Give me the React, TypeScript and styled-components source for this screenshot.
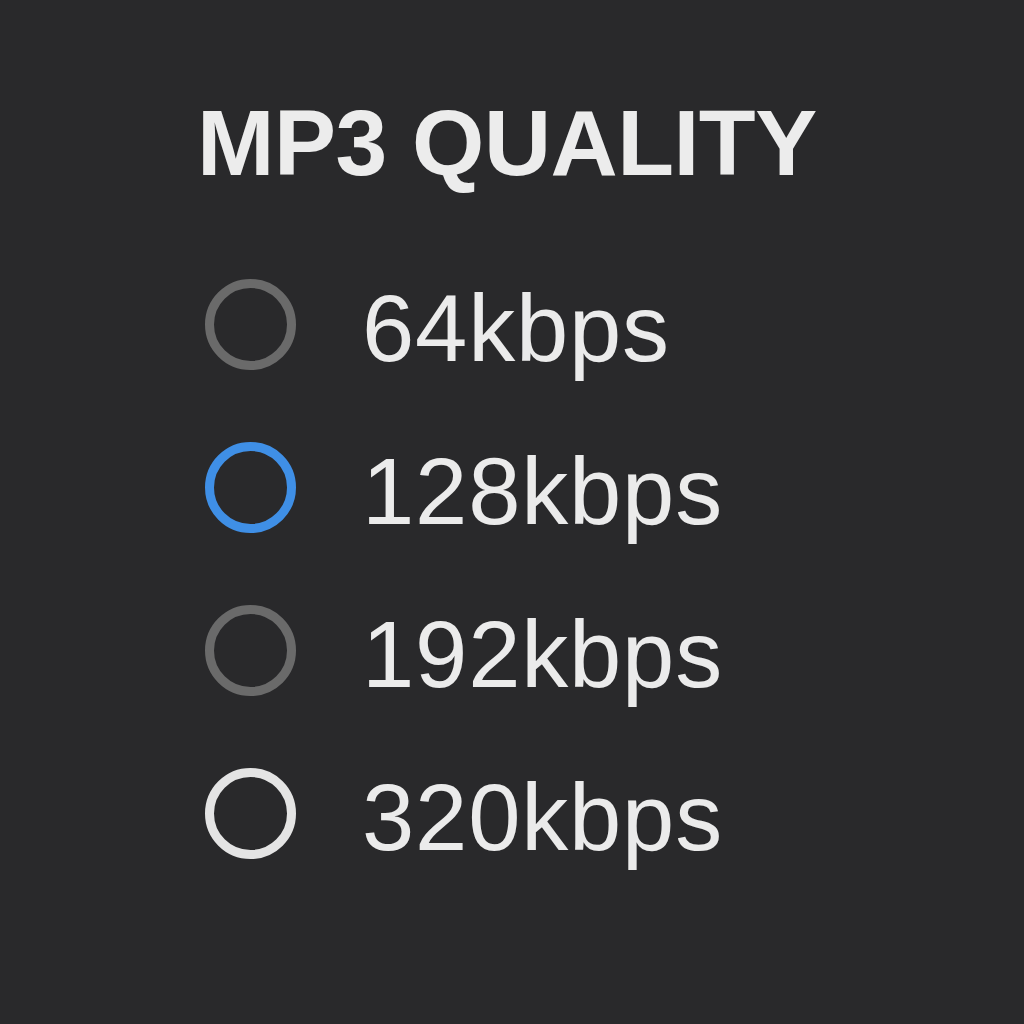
import styled, { createGlobalStyle } from "styled-components";

const GlobalStyle = createGlobalStyle`
  html, body {
    margin: 0;
    padding: 0;
    background-color: #29292b;
  }
`;

const Page = styled.div`
  width: 1024px;
  height: 1024px;
  box-sizing: border-box;
  padding: 97px 0 0 197px;
  background-color: #29292b;
  font-family: "Liberation Sans", Arial, sans-serif;
`;

const Title = styled.div`
  font-size: 93px;
  line-height: 93px;
  font-weight: 700;
  color: #ececec;
  letter-spacing: -0.5px;
  margin-bottom: 53px;
`;

const OptionList = styled.div`
  display: flex;
  flex-direction: column;
`;

const OptionRow = styled.div`
  display: flex;
  flex-direction: row;
  align-items: center;
  height: 163px;
`;

const Radio = styled.div<{ $color: string }>`
  width: 91px;
  height: 91px;
  box-sizing: border-box;
  border-radius: 50%;
  border: 9px solid ${(p) => p.$color};
  margin-left: 8px;
  flex-shrink: 0;
`;

const Label = styled.div`
  font-size: 94px;
  line-height: 94px;
  color: #ebebeb;
  margin-left: 66px;
  padding-top: 8px;
  letter-spacing: 0.8px;
`;

const options = [
  { label: "64kbps", color: "#6a6a6a" },
  { label: "128kbps", color: "#3f8fe6" },
  { label: "192kbps", color: "#6a6a6a" },
  { label: "320kbps", color: "#e4e4e4" },
];

const App: React.FC = () => {
  return (
    <Page>
      <GlobalStyle />
      <Title>MP3 QUALITY</Title>
      <OptionList>
        {options.map((o) => (
          <OptionRow key={o.label}>
            <Radio $color={o.color} />
            <Label>{o.label}</Label>
          </OptionRow>
        ))}
      </OptionList>
    </Page>
  );
};

export default App;
